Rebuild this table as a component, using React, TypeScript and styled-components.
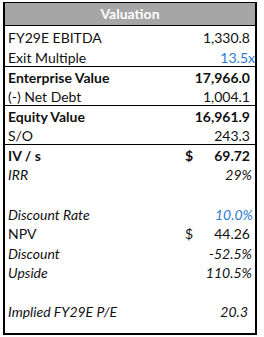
import styled, { createGlobalStyle, css } from 'styled-components';

const GlobalStyle = createGlobalStyle`
  html, body {
    margin: 0;
    padding: 0;
    background: #ffffff;
  }
  body {
    font-family: Lato, 'Liberation Sans', Arial, sans-serif;
    color: #111111;
  }
`;

interface RowData {
  label: string;
  value?: string;
  dollar?: boolean;
  bold?: boolean;
  italic?: boolean;
  blue?: boolean;
  nudge?: number;
  height: number;
  rule?: boolean;
}

const rows: RowData[] = [
  { label: 'FY29E EBITDA', value: '1,330.8', height: 21 },
  { label: 'Exit Multiple', value: '13.5x', blue: true, nudge: -5, height: 20, rule: true },
  { label: 'Enterprise Value', value: '17,966.0', bold: true, height: 20 },
  { label: '(-) Net Debt', value: '1,004.1', height: 19, rule: true },
  { label: 'Equity Value', value: '16,961.9', bold: true, height: 20 },
  { label: 'S/O', value: '243.3', height: 19, rule: true },
  { label: 'IV / s', value: '69.72', dollar: true, bold: true, height: 19 },
  { label: 'IRR', value: '29%', italic: true, nudge: -2, height: 20 },
  { label: '', height: 20 },
  { label: 'Discount Rate', value: '10.0%', italic: true, blue: true, nudge: -3, height: 19 },
  { label: 'NPV', value: '44.26', dollar: true, height: 20 },
  { label: 'Discount', value: '-52.5%', italic: true, nudge: -2, height: 19 },
  { label: 'Upside', value: '110.5%', italic: true, nudge: -2, height: 20 },
  { label: '', height: 19 },
  { label: 'Implied FY29E P/E', value: '20.3', italic: true, nudge: 2, height: 20 },
];

export default function App() {
  return (
    <>
      <GlobalStyle />
      <Page>
        <Table>
          <Header>Valuation</Header>
          {rows.map((row, index) => (
            <Row key={index} $height={row.height} $rule={row.rule} $bold={row.bold} $italic={row.italic}>
              <Label>{row.label}</Label>
              <Amount>
                <span>{row.dollar ? '$' : ''}</span>
                <Value $blue={row.blue} style={row.nudge ? { marginRight: row.nudge } : undefined}>
                  {row.value}
                </Value>
              </Amount>
            </Row>
          ))}
          <Tail />
        </Table>
      </Page>
    </>
  );
}

const Page = styled.div`
  padding: 2px 0 0 3px;
`;

const Table = styled.div`
  width: 254px;
  box-sizing: border-box;
  border: 2px solid #000;
  border-top-width: 1px;
  display: flex;
  flex-direction: column;
`;

const Header = styled.div`
  height: 22px;
  background: #a6a6a6;
  border-bottom: 1px solid #000;
  color: #ffffff;
  font-weight: 700;
  font-size: 14px;
  line-height: 22px;
  text-align: center;
`;

const Row = styled.div<{ $height: number; $rule?: boolean; $bold?: boolean; $italic?: boolean }>`
  display: grid;
  grid-template-columns: 1fr 65px;
  align-items: center;
  height: ${({ $height }) => $height}px;
  padding: 1px 5px 0 3px;
  box-sizing: border-box;
  font-size: 14px;
  white-space: nowrap;
  ${({ $rule }) =>
    $rule &&
    css`
      border-bottom: 1px solid #000;
    `}
  ${({ $bold }) =>
    $bold &&
    css`
      font-weight: 700;
    `}
  ${({ $italic }) =>
    $italic &&
    css`
      font-style: italic;
    `}
`;

const Label = styled.span``;

const Amount = styled.div`
  display: flex;
  justify-content: space-between;
`;

const Value = styled.span<{ $blue?: boolean }>`
  color: ${({ $blue }) => ($blue ? '#2e7bcf' : 'inherit')};
`;

const Tail = styled.div`
  height: 12px;
`;
